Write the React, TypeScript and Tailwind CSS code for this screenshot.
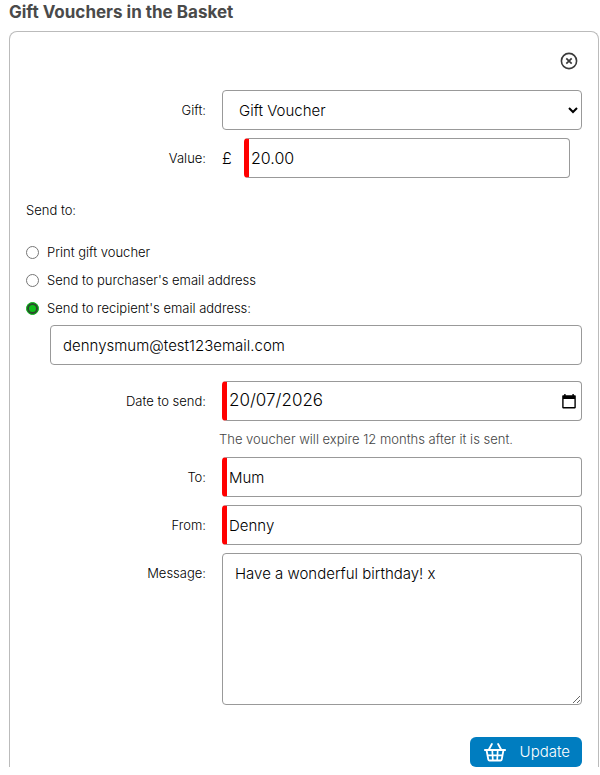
import React, { useState } from 'react';

const fieldClass =
  'block h-10 w-full min-w-0 rounded border border-[#999] bg-white font-light text-black focus:outline-none';
const requiredClass = 'border-l-[5px] border-l-[#f00] pl-[2px] pr-3';
const labelClass = 'pt-[10px] text-right text-[13px] leading-5 font-light';

const sendOptions = [
  { value: 'print', label: 'Print gift voucher' },
  { value: 'purchaser', label: "Send to purchaser's email address" },
  { value: 'recipient', label: "Send to recipient's email address:" },
];

const RemoveIcon = () => (
  <svg viewBox="0 0 18 18" className="size-[18px]" fill="none" stroke="#3a3a3a" aria-hidden="true">
    <circle cx="9" cy="9" r="7.6" strokeWidth="1.6" />
    <path d="M6.3 6.3l5.4 5.4M11.7 6.3l-5.4 5.4" strokeWidth="1.7" />
  </svg>
);

const CalendarIcon = () => (
  <svg viewBox="0 0 14 15" className="h-[15px] w-[14px]" aria-hidden="true">
    <path
      fillRule="evenodd"
      d="M2.2 0h1.4v1.2h6.8V0h1.4v1.2H13a.8.8 0 0 1 .8.8v11.6a.8.8 0 0 1-.8.8H1a.8.8 0 0 1-.8-.8V2a.8.8 0 0 1 .8-.8h1.2zM1.6 5v8h10.8V5z"
      fill="#000"
    />
  </svg>
);

const BasketIcon = () => (
  <svg viewBox="0 0 22 19" className="h-[19px] w-[22px]" fill="none" stroke="#fff" aria-hidden="true">
    <path d="M7.9 1L4.9 6.5M14.1 1l3 5.5" strokeWidth="1.8" strokeLinecap="round" />
    <path d="M.8 7h20.4" strokeWidth="1.8" strokeLinecap="round" />
    <path d="M2.6 7.5l1.7 9q.2 1 1.2 1h11q1 0 1.2-1l1.7-9" strokeWidth="1.8" />
    <path d="M3.4 12.3h15.2M8.3 7.5l.5 9.5M13.7 7.5l-.5 9.5" strokeWidth="1.7" />
  </svg>
);

export default function App() {
  const [gift, setGift] = useState('voucher');
  const [value, setValue] = useState('20.00');
  const [sendTo, setSendTo] = useState('recipient');
  const [email, setEmail] = useState('dennysmum@test123email.com');
  const [date, setDate] = useState('20/07/2026');
  const [to, setTo] = useState('Mum');
  const [from, setFrom] = useState('Denny');
  const [message, setMessage] = useState('Have a wonderful birthday! x');

  const handleSubmit = (e: React.FormEvent) => {
    e.preventDefault();
  };

  return (
    <main className="bg-white pl-[9px] pr-px font-['Inter','Liberation_Sans',sans-serif] text-black">
      <h2 className="h-[31px] text-[17px] leading-6 font-bold text-[#4a4a4a]">
        Gift Vouchers in the Basket
      </h2>

      <form
        onSubmit={handleSubmit}
        className="rounded-t-lg border border-b-0 border-[#bbb] px-4 pt-5"
      >
        <div className="flex justify-end pr-1">
          <button type="button" aria-label="Remove voucher">
            <RemoveIcon />
          </button>
        </div>

        <div className="mt-5 grid grid-cols-[180px_1fr] gap-x-4 gap-y-2">
          <label htmlFor="gift" className={labelClass}>Gift:</label>
          <select
            id="gift"
            value={gift}
            onChange={(e) => setGift(e.target.value)}
            className={`${fieldClass} pl-3 text-[15px]`}
          >
            <option value="voucher">Gift Voucher</option>
          </select>

          <label htmlFor="value" className={labelClass}>Value:</label>
          <div className="flex items-center pr-3">
            <span className="w-[22px] shrink-0 text-base font-light">£</span>
            <input
              id="value"
              type="text"
              value={value}
              onChange={(e) => setValue(e.target.value)}
              className={`${fieldClass} ${requiredClass} text-base`}
              required
            />
          </div>
        </div>

        <fieldset className="mt-[22px]">
          <legend className="text-[13px] leading-5 font-light">Send to:</legend>
          <div className="mt-[22px] space-y-2">
            {sendOptions.map((option) => (
              <label
                key={option.value}
                className="flex items-center gap-2 text-[13px] leading-5 font-light"
              >
                <input
                  type="radio"
                  name="send-to"
                  value={option.value}
                  checked={sendTo === option.value}
                  onChange={() => setSendTo(option.value)}
                  className="size-[13px] appearance-none rounded-full border border-[#767676] bg-white checked:border-[#0fae1c] checked:bg-[#0fbf1b] checked:inset-ring-2 checked:inset-ring-[#2c4a2e]"
                />
                {option.label}
              </label>
            ))}
          </div>
          <div className="mt-[7px] pl-6">
            <input
              type="email"
              aria-label="Recipient's email address"
              value={email}
              onChange={(e) => setEmail(e.target.value)}
              className={`${fieldClass} px-3 text-[15px]`}
            />
          </div>
        </fieldset>

        <div className="mt-4 grid grid-cols-[180px_1fr] gap-x-4 gap-y-2">
          <label htmlFor="date" className={labelClass}>Date to send:</label>
          <div>
            <div className={`${fieldClass} ${requiredClass} flex items-center !pr-[5px]`}>
              <input
                id="date"
                type="text"
                value={date}
                onChange={(e) => setDate(e.target.value)}
                className="min-w-0 flex-1 text-[17px] focus:outline-none"
                required
              />
              <button type="button" aria-label="Show date picker">
                <CalendarIcon />
              </button>
            </div>
            <p className="-ml-[3px] mt-2 text-[13px] leading-5 font-light text-[#444]">
              The voucher will expire 12 months after it is sent.
            </p>
          </div>

          <label htmlFor="to" className={labelClass}>To:</label>
          <input
            id="to"
            type="text"
            value={to}
            onChange={(e) => setTo(e.target.value)}
            className={`${fieldClass} ${requiredClass} text-[15px]`}
            required
          />

          <label htmlFor="from" className={labelClass}>From:</label>
          <input
            id="from"
            type="text"
            value={from}
            onChange={(e) => setFrom(e.target.value)}
            className={`${fieldClass} ${requiredClass} text-[15px]`}
            required
          />

          <label htmlFor="message" className={labelClass}>Message:</label>
          <textarea
            id="message"
            value={message}
            onChange={(e) => setMessage(e.target.value)}
            className="block h-[152px] w-full rounded border border-[#999] bg-white px-3 py-2 text-[15px] leading-6 font-light focus:outline-none"
          />
        </div>

        <div className="mt-8 flex justify-end">
          <button
            type="submit"
            className="flex h-[30px] items-center gap-[14px] rounded-md bg-[#007dc0] pr-3 pl-[14px] text-[15px] font-light text-white hover:bg-[#006ba6]"
          >
            <BasketIcon />
            Update
          </button>
        </div>
      </form>
    </main>
  );
}
